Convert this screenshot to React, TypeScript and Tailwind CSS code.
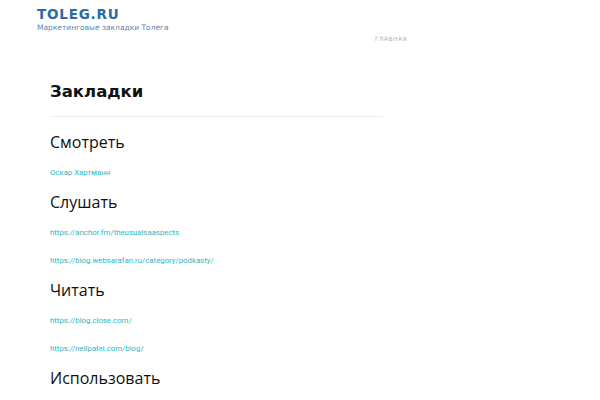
export default function App() {
  const sections = [
    { title: 'Смотреть', links: ['Оскар Хартманн'] },
    {
      title: 'Слушать',
      links: ['https://anchor.fm/theusualsaaspects', 'https://blog.websarafan.ru/category/podkasty/'],
    },
    { title: 'Читать', links: ['https://blog.close.com/', 'https://neilpatel.com/blog/'] },
    { title: 'Использовать', links: [] },
  ]

  return (
    <div className="w-[600px] h-[400px] overflow-hidden bg-white">
      {/* Header */}
      <header className="relative h-[44px]">
        <div className="pl-[37px] pt-[6px]">
          <div className="text-[13.5px] leading-[16px] font-bold tracking-[0.8px] text-[#2b6aa6] font-['DejaVu_Sans',sans-serif]">
            TOLEG.RU
          </div>
          <div className="text-[7.5px] leading-[10px] mt-[1px] text-[#5b87b0] font-['DejaVu_Sans',sans-serif]">
            Маркетинговые закладки Толега
          </div>
        </div>
        <nav className="absolute left-[375px] top-[34px] text-[6px] tracking-[0.4px] text-[#b0b0b0] font-['DejaVu_Sans',sans-serif]">
          ГЛАВНАЯ
        </nav>
      </header>

      {/* Content */}
      <main className="pl-[50px] w-[383px] pt-[37px]">
        <h1 className="text-[16.5px] leading-[22px] font-bold text-[#111] font-['DejaVu_Sans',sans-serif]">
          Закладки
        </h1>
        <div className="mt-[13px] border-t border-[#eeeeee]" />
        <div className="pt-[15px]">
          {sections.map((s) => (
            <section key={s.title}>
              <h2 className="text-[16px] leading-[20px] text-[#111] font-['Open_Sans',sans-serif]">
                {s.title}
              </h2>
              <div className="pt-[7px] pb-[5px]">
                {s.links.map((l) => (
                  <a
                    key={l}
                    href="#"
                    className="block text-[7.8px] leading-[28px] text-[#2bb8c4] font-['Roboto',sans-serif]"
                  >
                    {l}
                  </a>
                ))}
              </div>
            </section>
          ))}
        </div>
      </main>
    </div>
  )
}
